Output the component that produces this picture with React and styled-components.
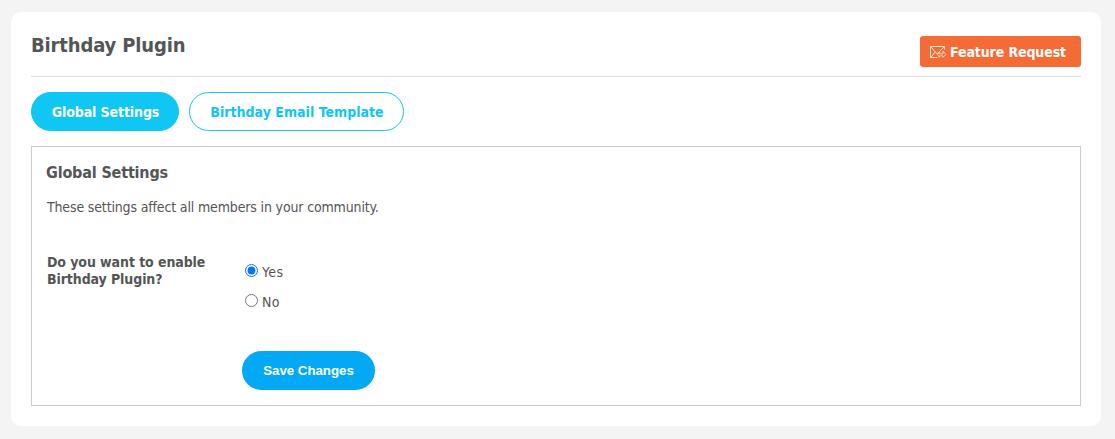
import React, { useState } from "react";
import styled, { createGlobalStyle } from "styled-components";

const GlobalStyle = createGlobalStyle`
  * { box-sizing: border-box; }
  body {
    margin: 0;
    background: #f4f4f4;
    color: #555;
    font-family: "DejaVu Sans Condensed", "DejaVu Sans", sans-serif;
    font-stretch: condensed;
    font-size: 14px;
  }
`;

const Page = styled.div`
  height: 439px;
  padding: 12px 14px 13px 11px;
`;

const Card = styled.main`
  height: 414px;
  padding: 0 20px;
  background: #fff;
  border-radius: 10px;
`;

const Header = styled.header`
  display: flex;
  justify-content: space-between;
  align-items: flex-start;
  height: 65px;
  border-bottom: 1px solid #ddd;
`;

const Title = styled.h2`
  margin: 20px 0 0;
  font-size: 20px;
  line-height: 26px;
  letter-spacing: -0.15px;
`;

const FeatureButton = styled.a`
  display: flex;
  align-items: center;
  gap: 3px;
  width: 161px;
  height: 31px;
  margin-top: 24px;
  padding-left: 10px;
  border-radius: 3px;
  background: #f56b35;
  color: #fff;
  font-weight: bold;
  line-height: 32px;
  letter-spacing: -0.1px;
  white-space: nowrap;
`;

const Tabs = styled.nav`
  display: flex;
  gap: 10px;
  margin-top: 15px;
`;

const Tab = styled.a`
  height: 39px;
  width: ${(p) => p.$width}px;
  padding-left: 1px;
  border: 1px solid #10c6f2;
  border-radius: 20px;
  background: ${(p) => (p.$active ? "#10c6f2" : "#fff")};
  color: ${(p) => (p.$active ? "#fff" : "#10c6f2")};
  font-weight: bold;
  line-height: 38px;
  letter-spacing: ${(p) => (p.$active ? "-0.1px" : "0.02px")};
  text-align: center;
  white-space: nowrap;
`;

const Panel = styled.section`
  height: 260px;
  margin-top: 15px;
  padding: 16px 14px 15px;
  border: 1px solid #ccc;
`;

const PanelTitle = styled.h3`
  margin: 0;
  font-size: 16px;
  line-height: 20px;
  letter-spacing: -0.17px;
`;

const Description = styled.p`
  margin: 15px 0 0 1px;
  line-height: 18px;
  letter-spacing: -0.15px;
`;

const FormRow = styled.div`
  display: flex;
  margin: 38px 0 0 1px;
`;

const Label = styled.div`
  width: 195px;
  font-weight: bold;
  line-height: 17px;
  letter-spacing: -0.09px;
`;

const Options = styled.div`
  display: flex;
  flex-direction: column;
  gap: 12px;
  padding: 9px 0 0 3px;
`;

const Option = styled.label`
  display: flex;
  gap: 4px;
  height: 18px;
  line-height: 18px;
  letter-spacing: 0.4px;
`;

const Radio = styled.input`
  width: 13px;
  height: 13px;
  margin: 1px 0 0;
`;

const SaveButton = styled.button`
  display: block;
  width: 133px;
  height: 39px;
  margin: 40px 0 0 196px;
  padding: 0;
  border: 0;
  border-radius: 20px;
  background: #03a9f4;
  color: #fff;
  font: bold 13.333px "Liberation Sans", Arial, sans-serif;
  letter-spacing: -0.05px;
`;

const MailIcon = () => (
  <svg width="17" height="14" viewBox="0 0 17 14" fill="none" stroke="#fff" strokeOpacity=".8" strokeWidth="1">
    <path d="M7.5 12.5h-7v-11h14v3M1 2l6.2 7L14 2M1 12l4.3-5" />
    <path strokeWidth=".8" d="M7.5 9.5 9.5 7.5v1.3h3.5V6.2l3 3.2-3 3v-1.6H9.5v1.5z" />
  </svg>
);

export default function App() {
  const [enabled, setEnabled] = useState("Yes");
  return (
    <Page>
      <GlobalStyle />
      <Card>
        <Header>
          <Title>Birthday Plugin</Title>
          <FeatureButton><MailIcon />Feature Request</FeatureButton>
        </Header>
        <Tabs>
          <Tab $active $width={148}>Global Settings</Tab>
          <Tab $width={215}>Birthday Email Template</Tab>
        </Tabs>
        <Panel>
          <PanelTitle>Global Settings</PanelTitle>
          <Description>These settings affect all members in your community.</Description>
          <FormRow>
            <Label>Do you want to enable<br />Birthday Plugin?</Label>
            <Options>
              {["Yes", "No"].map((value) => (
                <Option key={value}>
                  <Radio type="radio" name="enabled" checked={enabled === value} onChange={() => setEnabled(value)} />
                  {value}
                </Option>
              ))}
            </Options>
          </FormRow>
          <SaveButton>Save Changes</SaveButton>
        </Panel>
      </Card>
    </Page>
  );
}
